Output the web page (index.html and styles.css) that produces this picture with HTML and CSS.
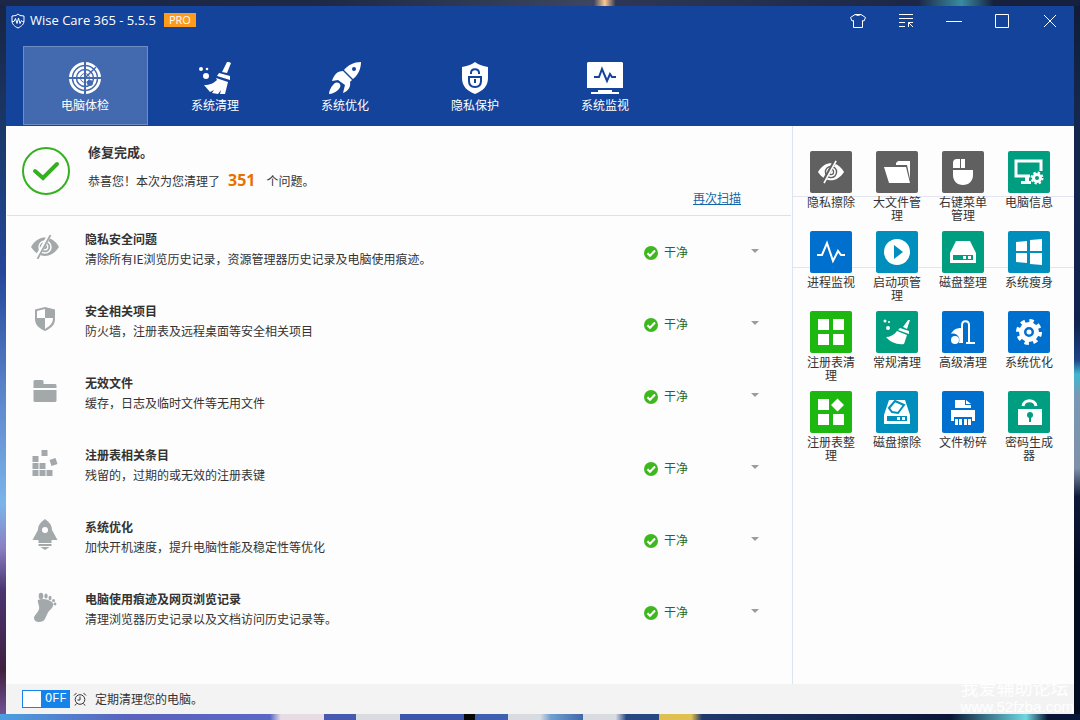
FILE: index.html
```html
<!DOCTYPE html>
<html lang="zh-CN">
<head>
    <meta charset="UTF-8">
    <meta name="viewport" content="width=device-width, initial-scale=1.0">
    <title>Wise Care 365</title>
    <link rel="stylesheet" href="styles.css">
</head>
<body>
    <!-- Shared icons -->
    <svg class="defs" aria-hidden="true">
        <symbol id="broom" viewBox="0 0 32 32">
            <path d="M28 0h2l2 1-4 10-5-1z M20 11l11 3v4L18 14z M17 16l12 4-3 12h-5l1-4-3 4-6-1 2-3-4 2-6-7c6 0 10-2 13-5z"/>
            <circle cx="2" cy="7" r="2"/><circle cx="8" cy="7" r="1.300"/><circle cx="7" cy="14" r="3"/>
        </symbol>
        <symbol id="clean" viewBox="0 0 14 14">
            <circle cx="7" cy="7" r="7" fill="#3eb81e"/>
            <path d="M3.500 7.200l2.500 2.600 5-5.300" fill="none" stroke="#fff" stroke-width="2"/>
        </symbol>
        <symbol id="eye" viewBox="0 0 28 24">
            <path d="M0 12C4 5 9 2.500 14 2.500S24 5 28 12c-4 6-9 9-14 9S4 18 0 12z"/>
            <circle cx="14" cy="12" r="6" fill="none" stroke="var(--cut)" stroke-width="1.500"/>
            <circle cx="14" cy="12" r="2.800" fill="none" stroke="var(--cut)" stroke-width="1.300"/>
            <path d="M18.500 0L5.500 23" stroke="var(--cut)" stroke-width="4"/>
            <path d="M19.500 0L6.500 24" stroke="currentColor" stroke-width="1.800"/>
        </symbol>
    </svg>

    <div class="window">
        <header>
            <div class="titlebar">
                <svg width="14" height="16" viewBox="0 0 14 16"><path d="M7 1l2 1.500 4 .5v5c0 3-2.500 5.500-6 7-3.500-1.500-6-4-6-7V3l4-.5z M1 8.500h2l1.500-3 1.500 5L7.500 5 9 10.500l1.500-3 1 1H13" fill="none" stroke="#fff"/></svg>
                <h1>Wise Care 365 - 5.5.5</h1>
                <span class="pro">PRO</span>
                <div class="controls">
                    <button aria-label="皮肤"><svg width="16" height="14" viewBox="0 0 16 14"><path d="M5 .5h6l4.500 3-1.500 3.500-1.500-.5v7h-9v-7L2 7 .5 3.500z M5 .5q3 2 6 0"/></svg></button>
                    <button aria-label="菜单"><svg width="16" height="14" viewBox="0 0 16 14"><path d="M1 .5h14M1 4.500h14M1 8.500h6M1 12.500h6M10.500 13V8.500H15M10.500 8.500l4.500 4.500"/></svg></button>
                    <button aria-label="最小化"><svg width="16" height="14" viewBox="0 0 16 14"><path d="M0 7.500h16"/></svg></button>
                    <button aria-label="最大化"><svg width="14" height="14" viewBox="0 0 14 14"><path d="M.5.5h13v13H.5z"/></svg></button>
                    <button aria-label="关闭"><svg width="14" height="14" viewBox="0 0 14 14"><path d="M1 1l12 12M13 1L1 13"/></svg></button>
                </div>
            </div>
            <nav>
                <button class="tab active">
                    <svg width="32" height="32" viewBox="0 0 32 32">
                        <circle cx="16" cy="16" r="16"/>
                        <g fill="none" stroke="#4369ae"><circle cx="16" cy="16" r="12.500" stroke-width="1.500"/><circle cx="16" cy="16" r="8.500" stroke-width="1.500"/><circle cx="16" cy="16" r="4.500"/><path d="M16 0v32M0 16h32" stroke-width="2"/><path d="M16 16L27 5" stroke-width="1.500"/></g>
                        <circle cx="21" cy="21" r="3" fill="#4369ae"/>
                    </svg>
                    电脑体检
                </button>
                <button class="tab">
                    <svg width="32" height="32"><use href="#broom"/></svg>
                    系统清理
                </button>
                <button class="tab">
                    <svg width="32" height="32" viewBox="0 0 32 32">
                        <path d="M32 0c0 7-3 13-8 17l-9-9C19 3 25 0 32 0z M14 9l9 9-2 2c1 5-2 9-7 11l2-8-7-5-6 1C5 13 8 9 14 9z M10 21c2 2 2 4-1 7-2 2-6 4-9 4 0-3 2-7 4-9 2-3 4-3 6-2z"/>
                        <circle cx="25" cy="7" r="2" fill="#14439b"/>
                    </svg>
                    系统优化
                </button>
                <button class="tab">
                    <svg width="32" height="32" viewBox="0 0 32 32">
                        <path d="M16 0c4 3 8 4 13 5v11c0 8-5 13-13 16C8 29 3 24 3 16V5c5-1 9-2 13-5z"/>
                        <path d="M10 15h12v4c0 4-2 6-6 6s-6-2-6-6z M12 12v-1c0-5 8-5 8 0v1 M16 17v4" fill="none" stroke="#14439b" stroke-width="2"/>
                    </svg>
                    隐私保护
                </button>
                <button class="tab">
                    <svg width="36" height="32" viewBox="0 0 36 32">
                        <path d="M1 0h34l1 1v25H0V1z M11 28h14v2h7v2H4v-2h7z"/>
                        <path d="M7 15h5l3-8 5 12 3-7 2 3h4" fill="none" stroke="#14439b" stroke-width="2"/>
                    </svg>
                    系统监视
                </button>
            </nav>
        </header>

        <div class="content">
            <main>
                <section class="summary">
                    <svg class="line" width="48" height="48" viewBox="0 0 48 48" stroke="#35b021"><circle cx="24" cy="24" r="23" stroke-width="2"/><path d="M13 24l8 7 14-14" stroke-width="4" stroke-linecap="round"/></svg>
                    <div class="result">
                        <h2>修复完成。</h2>
                        <p>恭喜您！本次为您清理了<strong>351</strong>个问题。</p>
                    </div>
                    <a href="#">再次扫描</a>
                </section>

                <ul class="checks">
                    <li>
                        <svg class="icon" width="28" height="24" viewBox="0 0 28 24"><use href="#eye"/></svg>
                        <div class="info"><h3>隐私安全问题</h3><p>清除所有IE浏览历史记录，资源管理器历史记录及电脑使用痕迹。</p></div>
                        <span class="status"><svg width="14" height="14"><use href="#clean"/></svg>干净</span>
                        <button class="expand" aria-label="展开"></button>
                    </li>
                    <li>
                        <svg class="icon" width="22" height="24" viewBox="0 0 22 24"><path d="M11 0l10 2.500v10c0 5-4 9-10 11.500C5 21.500 1 17.500 1 12.500v-10z"/><path d="M3 4l8-2v9H3z M11 11h8c0 5-3 8-8 11z" fill="#fff"/></svg>
                        <div class="info"><h3>安全相关项目</h3><p>防火墙，注册表及远程桌面等安全相关项目</p></div>
                        <span class="status"><svg width="14" height="14"><use href="#clean"/></svg>干净</span>
                        <button class="expand" aria-label="展开"></button>
                    </li>
                    <li>
                        <svg class="icon" width="23" height="22" viewBox="0 0 23 22"><path d="M1 0h8l1 1v3h12l1 1v3H0V1z M0 10h23v11l-1 1H1l-1-1z"/></svg>
                        <div class="info"><h3>无效文件</h3><p>缓存，日志及临时文件等无用文件</p></div>
                        <span class="status"><svg width="14" height="14"><use href="#clean"/></svg>干净</span>
                        <button class="expand" aria-label="展开"></button>
                    </li>
                    <li>
                        <svg class="icon" width="25" height="26" viewBox="0 0 25 26"><path d="M9 0h6v6H9z M0 6h6v6H0z M0 13h6v6H0z M7 13h6v6H7z M0 20h6v6H0z M7 20h6v6H7z M14 20h6v6h-6z M17 10l6-2 2 6-6 2z"/></svg>
                        <div class="info"><h3>注册表相关条目</h3><p>残留的，过期的或无效的注册表键</p></div>
                        <span class="status"><svg width="14" height="14"><use href="#clean"/></svg>干净</span>
                        <button class="expand" aria-label="展开"></button>
                    </li>
                    <li>
                        <svg class="icon" width="25" height="32" viewBox="0 0 25 32"><path d="M12.500 0c4 3 7 6 7 11l5.500 10h-6v3H6v-3H0l5.500-10c0-5 3-8 7-11z M6 25h13v2H6z M8 28h9l-4.500 3z"/><circle cx="12.500" cy="11" r="3" fill="#fff"/></svg>
                        <div class="info"><h3>系统优化</h3><p>加快开机速度，提升电脑性能及稳定性等优化</p></div>
                        <span class="status"><svg width="14" height="14"><use href="#clean"/></svg>干净</span>
                        <button class="expand" aria-label="展开"></button>
                    </li>
                    <li>
                        <svg class="icon" width="24" height="30" viewBox="0 0 24 30"><path d="M5 8c4-2 10-1 14 2 3 3 0 6-3 9-3 4-3 8-6 10-4 2-9 1-9-3 0-3 4-5 5-9 1-3-2-7-1-9z"/><ellipse cx="8" cy="4" rx="2.300" ry="3.300"/><ellipse cx="13" cy="4" rx="1.700" ry="2.600"/><ellipse cx="17" cy="6" rx="1.500" ry="2.200"/><circle cx="20.500" cy="8.500" r="1.500"/><circle cx="22" cy="12" r="1.400"/></svg>
                        <div class="info"><h3>电脑使用痕迹及网页浏览记录</h3><p>清理浏览器历史记录以及文档访问历史记录等。</p></div>
                        <span class="status"><svg width="14" height="14"><use href="#clean"/></svg>干净</span>
                        <button class="expand" aria-label="展开"></button>
                    </li>
                </ul>
            </main>

            <aside>
                <button class="tool gray"><svg viewBox="0 0 42 42"><use href="#eye" x="8" y="9" width="26" height="24"/></svg><span>隐私擦除</span></button>
                <button class="tool gray"><svg viewBox="0 0 42 42"><path d="M8 16h22l4 16H13z M20 12l2-2h12v18l-3-14H20z"/></svg><span>大文件管理</span></button>
                <button class="tool gray"><svg viewBox="0 0 42 42"><path d="M11 17v-5q0-4 4-4h3v9z M19 8h4v9h-4z M11 19h20v5c0 6-4 10-10 10s-10-4-10-10z"/></svg><span>右键菜单管理</span></button>
                <button class="tool green"><svg viewBox="0 0 42 42"><path d="M33 20V10H8v15h14" fill="none" stroke="#fff" stroke-width="3"/><path d="M17 26h4v4h2v3H13v-3h4z"/><circle cx="29" cy="27" r="3.500" fill="none" stroke="#fff" stroke-width="3"/><circle cx="29" cy="27" r="5.500" fill="none" stroke="#fff" stroke-width="2" stroke-dasharray="2.300 2.020"/></svg><span>电脑信息</span></button>
                <button class="tool blue"><svg viewBox="0 0 42 42"><path d="M7 24h5l5-12 6 18 5-10 3 4h4" fill="none" stroke="#fff" stroke-width="2"/></svg><span>进程监视</span></button>
                <button class="tool cyan"><svg viewBox="0 0 42 42"><circle cx="21" cy="21" r="13"/><path d="M18 14l9 7-9 7z" fill="#008ebc"/></svg><span>启动项管理</span></button>
                <button class="tool green"><svg viewBox="0 0 42 42"><path d="M14 10h14l6 12v10H8V22z"/><path d="M11 24h20v5H11z" fill="#009e80"/><path d="M21 25h3v3h-3z M26 25h3v3h-3z"/></svg><span>磁盘整理</span></button>
                <button class="tool cyan"><svg viewBox="0 0 42 42"><path d="M8 11l11-1v10H8z M22 9l12-1v12H22z M8 22h11v10L8 31z M22 22h12v12l-12-1z"/></svg><span>系统瘦身</span></button>
                <button class="tool lime"><svg viewBox="0 0 42 42"><path d="M8 8h11v11H8z M23 8h11v11H23z M8 23h11v11H8z M23 23h11v11H23z"/></svg><span>注册表清理</span></button>
                <button class="tool green"><svg viewBox="0 0 42 42"><path d="M32 9h2l-3 9-4-2z M24 17l9 3v3l-11-4z M21 20l10 4-3 9c-7 1-14-2-18-7 4 0 8-2 11-6z"/><circle cx="9" cy="10" r="1.500"/><circle cx="13" cy="11" r="1"/><circle cx="12" cy="17" r="2"/></svg><span>常规清理</span></button>
                <button class="tool blue"><svg viewBox="0 0 42 42"><path d="M9 23c2-4 5-6 10-6v15h-2c2-6-3-11-8-9z"/><circle cx="13" cy="29" r="4"/><path d="M20 32V14c0-5 7-5 7 0v18" fill="none" stroke="#fff" stroke-width="2"/><path d="M24 31h9v2h-9z"/></svg><span>高级清理</span></button>
                <button class="tool blue"><svg viewBox="0 0 42 42"><circle cx="21" cy="21" r="11" fill="none" stroke="#fff" stroke-width="4" stroke-dasharray="4.320 4.320"/><circle cx="21" cy="21" r="7.500" fill="none" stroke="#fff" stroke-width="5"/><circle cx="21" cy="21" r="2.500"/></svg><span>系统优化</span></button>
                <button class="tool lime"><svg viewBox="0 0 42 42"><path d="M8 8h11v11H8z M27.500 7.500L34 14l-6.500 6.500L21 14z M8 23h11v11H8z M23 23h11v11H23z"/></svg><span>注册表整理</span></button>
                <button class="tool cyan"><svg viewBox="0 0 42 42"><path d="M13 9h16l5 15v9H8v-9z"/><path d="M13 17l6-7 9 4-6 8-6-1z" stroke="#008ebc" stroke-width="2"/><path d="M11 25h20v5H11z" fill="#008ebc"/><path d="M21 26h3v3h-3z M26 26h3v3h-3z"/></svg><span>磁盘擦除</span></button>
                <button class="tool blue"><svg viewBox="0 0 42 42"><path d="M13 9h10v5h6v3H13z M24 9l5 4h-5z M9 19h24v11h-3v-4H12v4H9z M13 28h3v6h-3z M17 28h3v6h-3z M22 28h3v6h-3z M26 28h3v6h-3z"/></svg><span>文件粉碎</span></button>
                <button class="tool green"><svg viewBox="0 0 42 42"><path d="M15 15c1-7 12-7 13 0" fill="none" stroke="#fff" stroke-width="3"/><path d="M10 18h24v16H10z"/><circle cx="22" cy="24" r="3" fill="#009e80"/><path d="M21 25h2v6h-2z" fill="#009e80"/></svg><span>密码生成器</span></button>
            </aside>
        </div>

        <footer>
            <label class="switch"><input type="checkbox" aria-label="定期清理"><span>OFF</span></label>
            <svg class="line" width="14" height="14" viewBox="0 0 14 14" stroke="#333"><circle cx="7" cy="7.500" r="4.800"/><path d="M7 4.500V8H4.500M1 3.500L3.500 1M13 3.500L10.500 1M3.500 11.500L2 13.500M10.500 11.500l1.500 2"/></svg>
            <p>定期清理您的电脑。</p>
            <div class="watermark"><span>我爱辅助论坛</span><span>www.52fzba.com</span></div>
        </footer>
    </div>
</body>
</html>
```

FILE: styles.css
```css
* {
    box-sizing: border-box;
}
body {
    margin: 0;
    padding: 6px;
    min-height: 100vh;
    display: flex;
    font-family: "Noto Sans CJK SC", sans-serif;
    font-size: 12px;
    line-height: 20px;
    color: #333;
    /* desktop wallpaper around the window */
    background:
        linear-gradient(90deg, #1c2748, #1d2946 30%, #3c4660 55%, #ffc890 56%, #2d3755 57%, #1c2748 85%, #3a8ca0 89%, #16213f 92%) top / 100% 6px no-repeat,
        linear-gradient(90deg, #4c9fdf, #5a62bb 12%, #5a68c4 25%, #e8dce4 26%, #e8dce4 30%, #4658b0 30%, #4658b0 33%, #d8dce0 33%, #d8dce0 37%, #3d55ab 37%, #3d55ab 43%, #080808 43%, #080808 44%, #3d60b0 44%, #3d60b0 47%, #d8dce0 47%, #d8dce0 50%, #70a0d0 51%, #4068a8 54%, #d8dce0 54%, #d8dce0 57%, #284884 58%, #284884 61%, #e0c050 61%, #e0c050 64%, #20386c 65%, #0a1636 88%, #70d8e0 95%, #0a1636 97%) bottom / 100% 6px no-repeat,
        linear-gradient(#182340, #1b3a6e 20%, #24479a 38%, #5c86cc 55%, #7cb4ea 70%, #8a80c4 76%, #4a3570 82%, #40203f 93%, #7a58a0) left / 6px 100% no-repeat,
        linear-gradient(#101b36, #14284e 15%, #102250 45%, #1c4488 50%, #40b8d0 52%, #7898b4 55%, #8090a8 65%, #10183a 69%, #040c20 80%) right / 6px 100% no-repeat;
}
h1, h2, h3, p, ul {
    margin: 0;
    padding: 0;
}
h2, h3 {
    font-size: 12px;
    font-weight: bold;
}
button {
    border: none;
    padding: 0;
    background: none;
    color: inherit;
    font: inherit;
    cursor: pointer;
}
svg {
    flex: none;
    fill: currentColor;
}
.line {
    fill: none;
}
.defs {
    position: absolute;
    width: 0;
    height: 0;
}
.window {
    flex: 1;
    display: flex;
    flex-direction: column;
    min-width: 0;
    background: #fdfdfe;
}

/* Header */
header {
    background: #14439b;
    color: white;
}
.titlebar {
    display: flex;
    align-items: center;
    height: 30px;
    padding-left: 5px;
}
h1 {
    margin: 0 8px 0 5px;
    font: 13px/20px "Open Sans", sans-serif;
}
.titlebar h1,
.pro {
    margin-bottom: 3px;
}
.pro {
    padding: 0 5px;
    background: #ff9c1c;
    font: 11px/14px "Open Sans", sans-serif;
}
.controls {
    display: flex;
    margin-left: auto;
}
.controls button {
    display: flex;
    align-items: center;
    justify-content: center;
    width: 48px;
    height: 30px;
}
.controls svg {
    fill: none;
    stroke: white;
}
nav {
    display: flex;
    gap: 5px;
    padding: 10px 17px 1px;
}
.tab {
    display: flex;
    flex-direction: column;
    align-items: center;
    gap: 1px;
    width: 125px;
    height: 79px;
    padding: 15px 1px 0 0;
    border: 1px solid transparent;
}
.tab.active {
    background: #4369ae;
    border-color: #6f8dc3;
}

/* Scan result */
.content {
    flex: 1;
    display: flex;
}
main {
    flex: 1;
}
.summary {
    display: flex;
    height: 90px;
    margin: 0 1px;
    padding: 16px 50px 0 15px;
    border-bottom: 1px solid #dde1ea;
}
.summary > svg {
    margin-top: 5px;
}
.result {
    flex: 1;
    margin-left: 18px;
}
.result h2 {
    font-size: 13px;
    margin-bottom: 8px;
}
.result strong {
    margin: 0 11px 0 8px;
    color: #e87000;
    font: bold 16px/20px "Open Sans", sans-serif;
}
.summary a {
    align-self: flex-end;
    margin-bottom: 7px;
    color: #1466a8;
}
.checks {
    list-style: none;
    padding-top: 2px;
}
.checks li {
    display: flex;
    align-items: flex-start;
    height: 72px;
    padding: 11px 33px 0 19px;
}
.icon {
    --cut: #fdfdfe;
    align-self: center;
    width: 40px;
    margin-bottom: 25px;
    color: #a3a8ab;
}
.info {
    flex: 1;
    margin-left: 20px;
}
.status {
    display: flex;
    align-items: center;
    gap: 6px;
    width: 107px;
    margin-top: 13px;
    color: #286a1c;
}
.status svg {
    margin-top: 2px;
}
.expand {
    margin-top: 20px;
    border: 4px solid transparent;
    border-top-color: #999da2;
    border-bottom: 0;
}

/* Tools */
aside {
    display: grid;
    grid-template-columns: repeat(4, 50px);
    grid-auto-rows: 80px;
    column-gap: 16px;
    width: 282px;
    padding: 25px 13px 0;
    border-left: 1px solid #dde3f0;
    background:
        linear-gradient(#e2e5f0, #e2e5f0) 0 70px / 100% 1px no-repeat,
        linear-gradient(#e2e5f0, #e2e5f0) 0 141px / 100% 1px no-repeat;
}
.tool {
    display: flex;
    flex-direction: column;
    align-items: center;
    gap: 2px;
    line-height: 13px;
}
.tool svg {
    width: 42px;
    height: 42px;
    border-radius: 2px;
    color: white;
    background: var(--cut);
}
.gray { --cut: #606060; }
.green { --cut: #009e80; }
.blue { --cut: #0070cf; }
.cyan { --cut: #008ebc; }
.lime { --cut: #1db80f; }

/* Footer */
footer {
    position: relative;
    display: flex;
    align-items: center;
    height: 30px;
    padding: 0 16px;
    gap: 3px;
    background: #f3f3f3;
}
footer p {
    margin-left: 5px;
}
.switch {
    display: flex;
    align-items: center;
    width: 48px;
    height: 18px;
    border: 1px solid #1583ea;
    background: #1583ea;
    color: white;
    font: 12px/16px "Liberation Mono", monospace;
}
.switch input {
    appearance: none;
    width: 18px;
    height: 16px;
    margin: 0 4px 0 0;
    background: white;
}
.watermark {
    position: absolute;
    right: 0;
    bottom: 0;
    display: flex;
    flex-direction: column;
    color: white;
    font-size: 18px;
    line-height: 26px;
}
.watermark span:last-child {
    font: 15px/14px "Liberation Sans", sans-serif;
}
```
